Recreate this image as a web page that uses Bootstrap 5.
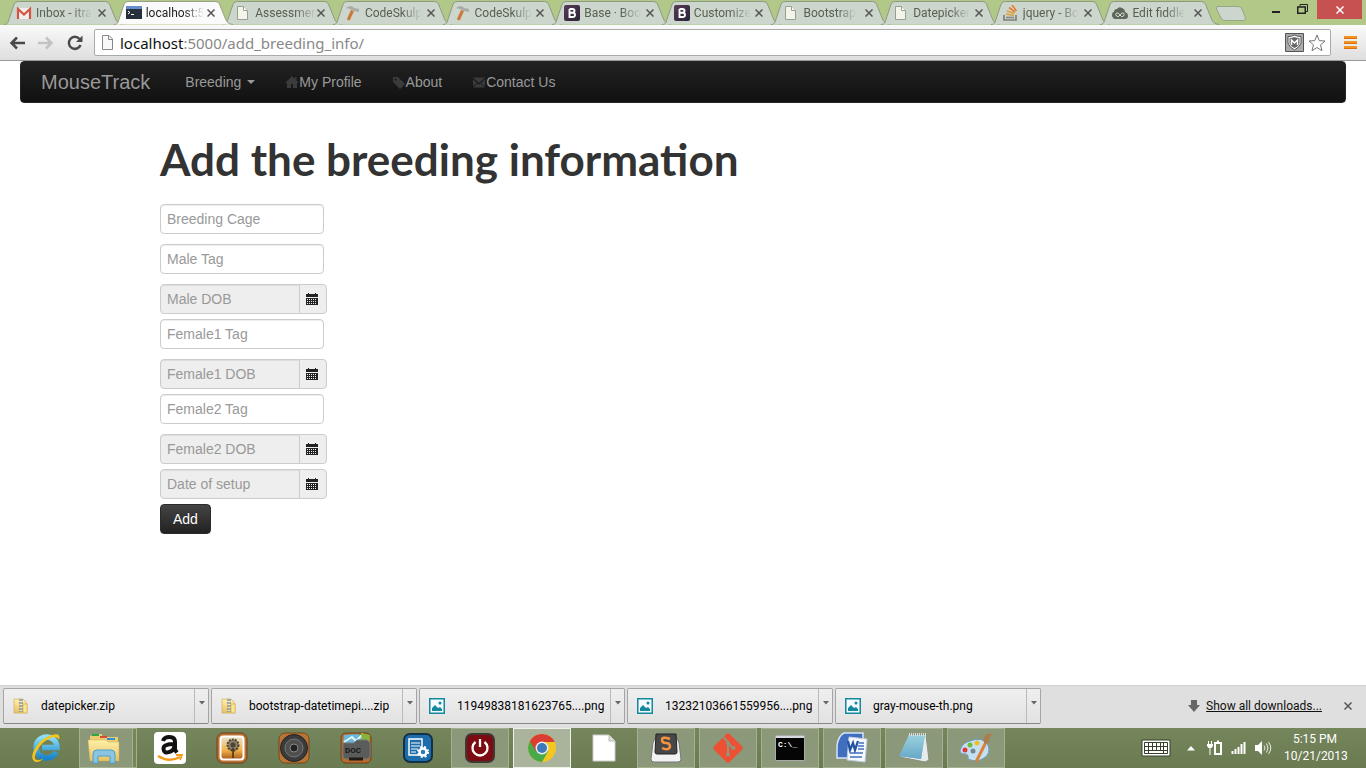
<!DOCTYPE html>
<html lang="en">
<head>
<meta charset="utf-8">
<meta name="viewport" content="width=device-width, initial-scale=1">
<title>MouseTrack</title>
<link href="https://cdn.jsdelivr.net/npm/bootstrap@5.3.0/dist/css/bootstrap.min.css" rel="stylesheet">
<style>
  body { font-family: "Liberation Sans", Arial, sans-serif; font-size: 14px; line-height: 20px; color: #333; background: #fff; }
  button { font: inherit; }
  svg { display: block; flex: none; }
  .chrome-ui { font-family: Roboto, "Noto Sans", sans-serif; font-size: 12px; }
  .bare { border: 0; padding: 0; background: none; color: inherit; }

  /* tab strip */
  .tabstrip { background: #b1c888; height: 25px; padding-left: 4px; }
  .tab-item { position: relative; flex: 1 1 0; min-width: 0; height: 25px; padding: 1px 8px 0 12px; color: #57604f; }
  .tab-item .shape { position: absolute; top: 0; left: 0; width: calc(100% + 10px); height: 25px; fill: #ccd6cd; stroke: #8d9a83; }
  .tab-item.current { z-index: 2; color: #222; }
  .tab-item.current .shape { fill: #fafafa; stroke: #98a088; }
  .tab-link { position: relative; color: inherit; text-decoration: none; gap: 4px; }
  .tab-text { white-space: nowrap; overflow: hidden; -webkit-mask-image: linear-gradient(90deg, #000 65%, transparent); mask-image: linear-gradient(90deg, #000 65%, transparent); }
  .tab-close { position: relative; }
  .tab-close, .shelf-close { color: #555; }
  .strip-end { width: 156px; }
  .win-close { width: 45px; height: 19px; background: #c75050; }

  /* toolbar */
  .toolbar { height: 36px; padding: 4px 8px 4px 9px; background: linear-gradient(#fafafa, #dedede); border-bottom: 1px solid #999; }
  .nav-icons { width: 85px; gap: 13px; }
  .omnibox { height: 27px; border: 1px solid #aaa; border-radius: 2px; background: #fff; padding: 0 4px 0 7px; }
  .omnibox a { font-family: "Noto Sans", sans-serif; font-size: 15px; line-height: 24px; color: #888; text-decoration: none; margin-left: 7px; }
  .omnibox b { font-weight: 400; color: #111; }
  .menu-btn { width: 27px; }

  /* page */
  .site-nav { min-height: 42px; padding: 0 20px; background: linear-gradient(#222, #111); border: 1px solid #252525; border-radius: 4px; }
  .site-nav .navbar-brand { font-size: 20px; line-height: 20px; padding: 10px 20px 10px 0; margin: 0; color: #999; }
  .site-nav .navbar-nav .nav-link { display: flex; align-items: center; padding: 10px 15px; color: #999; }
  .site-nav .dropdown-toggle::after { margin-left: 6px; border-width: 4px 4px 0; vertical-align: 0; }
  .site-nav svg { fill: #3b3b3b; }
  .page-body { padding: 24px 140px 40px; }
  .page-title { font-family: Rancho, Lato, sans-serif; font-size: 44px; line-height: 64px; font-weight: 700; color: #333; margin: 0 0 13px; }
  .field { height: 30px; padding: 4px 6px; font-size: 14px; line-height: 20px; border: 1px solid #ccc; border-radius: 4px; box-shadow: inset 0 1px 1px rgba(0,0,0,.075); }
  .field::placeholder { color: #999; }
  .tag-field { width: 164px; margin-bottom: 10px; }
  .date-group { width: 167px; height: 30px; margin-bottom: 5px; }
  .date-group .field, .date-group .input-group-text { background: #eee; }
  .date-group .input-group-text { width: 28px; padding: 0 6px; border-color: #ccc; border-radius: 4px; }
  .add-btn { height: 30px; padding: 4px 12px; font-size: 14px; line-height: 20px; color: #fff; text-shadow: 0 -1px 0 rgba(0,0,0,.25); background: linear-gradient(#444, #222); border: 1px solid #2b2b2b; border-radius: 4px; }

  /* downloads shelf */
  .shelf { height: 43px; padding: 2px 14px 4px 3px; gap: 2px; background: #dfdfdf; border-top: 1px solid #d2d2d2; color: #000; }
  .dl { flex: 0 1 206px; height: 36px; min-width: 0; border: 1px solid #a5a5a5; border-bottom-color: #888; border-radius: 2px; background: linear-gradient(#efefef, #e2e2e2); }
  .dl .file { padding-left: 9px; gap: 12px; min-width: 0; }
  .dl .more { width: 14px; height: 34px; border-left: 1px solid #bbb; padding: 12px 0 0 4px; }
  .shelf a { color: #111; }

  /* taskbar */
  .taskbar { height: 40px; padding: 0 20px 0 17px; gap: 4px; background: linear-gradient(#75855c, #6a7a51); color: #fff; }
  .task { flex: 0 1 58px; min-width: 34px; height: 40px; border: 1px solid transparent; }
  .task.open { border-color: #a5b08f; background: #8b987a; }
  .task.stacked { box-shadow: inset -3px 0 #75855c, inset -4px 0 #a5b08f; }
  .task.front { border-color: #eef0e8; background: #aab39c; }
  .clock { line-height: 17px; width: 62px; }
</style>
</head>
<body class="d-flex flex-column min-vh-100">

<svg width="0" height="0" class="position-absolute" aria-hidden="true">
  <defs>
    <linearGradient id="gBlue" x2="0" y2="1"><stop stop-color="#8ce0fa"/><stop offset="1" stop-color="#1784ca"/></linearGradient>
    <linearGradient id="gBoot" x2="1" y2="1"><stop stop-color="#5a3c58"/><stop offset="1" stop-color="#292336"/></linearGradient>
    <linearGradient id="gFold" x2="0" y2="1"><stop stop-color="#fff0a9"/><stop offset="1" stop-color="#e5c263"/></linearGradient>
    <linearGradient id="gSun" x2="0" y2="1"><stop stop-color="#e9e3d0"/><stop offset=".6" stop-color="#f0b24b"/><stop offset="1" stop-color="#a75818"/></linearGradient>
    <symbol id="tabshape" viewBox="0 0 118 25" preserveAspectRatio="none"><path d="M0 24.5C4 24.5 4 22 5 19L10 4Q11 1.5 14 1.5H100Q103 1.500 104 4L110 19Q112 24.500 118 24.500" vector-effect="non-scaling-stroke"/></symbol>
    <symbol id="x" viewBox="0 0 8 8"><path d="M.5.5L7.500 7.500M7.500.5L.5 7.500" stroke="currentColor" stroke-width="1.500"/></symbol>
    <symbol id="page" viewBox="0 0 16 16"><path d="M2.500 1.500H8.500L12.500 5.500V14.500H2.500Z" fill="#f3f5ea" stroke="#999f90"/><path d="M8.500 1.500V5.500H12.500" fill="#fff" stroke="#999f90"/></symbol>
    <symbol id="hammer" viewBox="0 0 16 16"><path d="M6 5L9 6L5 15Q3 16 2 14Z" fill="#c97a3a"/><path d="M1 3Q6-1 9 3L14 4V7L9 6L5 4Z" fill="#a9aca5"/></symbol>
    <symbol id="boot" viewBox="0 0 16 16"><rect width="16" height="16" rx="2" fill="url(#gBoot)"/><path d="M5.500 4H8.500Q10.500 4 10.500 5.800T8.500 7.700H5.500M8.500 7.700Q11 7.700 11 9.900T8.500 12H5.500V4" fill="none" stroke="#fff" stroke-width="1.900"/></symbol>
    <symbol id="zip" viewBox="0 0 16 16"><path d="M1 1H10L14 5V15H1Z" fill="url(#gFold)" stroke="#cda94e" stroke-width=".6"/><path d="M8 1V14" stroke="#566b85" stroke-width="3" stroke-dasharray="2 1"/><path d="M8 1V14" stroke="#e5e9ec"/><path d="M10 6H14V15H10Z" fill="#fae68b" stroke="#c9a850" stroke-width=".6"/></symbol>
    <symbol id="pic" viewBox="0 0 16 16"><path d="M.75.75H15.250V15.250H.75Z" fill="#f4fbfc" stroke="#14889f" stroke-width="1.500"/><path d="M3 13V10L6 7L9 10L11 9L13 11V13Z" fill="#14889f"/><circle cx="11" cy="5" r="1.500" fill="#14889f"/></symbol>
    <symbol id="cal" viewBox="0 0 12 12"><path d="M0 1H2V0H3V1H9V0H10V1H12V4H0ZM0 5H12V12H0Z" fill="#222"/><path d="M1 6.500H11M1 8.500H11M1 10.500H11" stroke="#eee" stroke-dasharray="1 1"/></symbol>
    <symbol id="caret" viewBox="0 0 6 4"><path d="M0 0H6L3 3.500Z" fill="#666"/></symbol>
  </defs>
</svg>

<header class="chrome-ui">
  <div class="tabstrip d-flex">
    <nav class="d-flex flex-grow-1" aria-label="Tabs">
      <div class="tab-item d-flex align-items-center"><svg class="shape"><use href="#tabshape"/></svg>
        <a href="#" class="tab-link d-flex flex-grow-1 align-items-center overflow-hidden"><svg width="16" height="16" viewBox="0 0 16 16"><path d="M1 3H15V14H1Z" fill="#eee"/><path d="M2 14V4L8 9.500L14 4V14" fill="none" stroke="#d65343" stroke-width="2.200"/></svg><span class="tab-text">Inbox - itra</span></a><button class="bare tab-close" aria-label="Close"><svg width="8" height="8"><use href="#x"/></svg></button></div>
      <div class="tab-item current d-flex align-items-center"><svg class="shape"><use href="#tabshape"/></svg>
        <a href="#" class="tab-link d-flex flex-grow-1 align-items-center overflow-hidden"><svg width="16" height="16" viewBox="0 0 16 16"><path d="M0 1H16V14H0Z" fill="#26303d"/><path d="M0 1H16V4H0Z" fill="#668dcc"/><path d="M2 6L4 7.500L2 9M5 9.500H8" stroke="#fff" fill="none"/></svg><span class="tab-text">localhost:5</span></a><button class="bare tab-close" aria-label="Close"><svg width="8" height="8"><use href="#x"/></svg></button></div>
      <div class="tab-item d-flex align-items-center"><svg class="shape"><use href="#tabshape"/></svg>
        <a href="#" class="tab-link d-flex flex-grow-1 align-items-center overflow-hidden"><svg width="16" height="16"><use href="#page"/></svg><span class="tab-text">Assessmen</span></a><button class="bare tab-close" aria-label="Close"><svg width="8" height="8"><use href="#x"/></svg></button></div>
      <div class="tab-item d-flex align-items-center"><svg class="shape"><use href="#tabshape"/></svg>
        <a href="#" class="tab-link d-flex flex-grow-1 align-items-center overflow-hidden"><svg width="16" height="16"><use href="#hammer"/></svg><span class="tab-text">CodeSkulp</span></a><button class="bare tab-close" aria-label="Close"><svg width="8" height="8"><use href="#x"/></svg></button></div>
      <div class="tab-item d-flex align-items-center"><svg class="shape"><use href="#tabshape"/></svg>
        <a href="#" class="tab-link d-flex flex-grow-1 align-items-center overflow-hidden"><svg width="16" height="16"><use href="#hammer"/></svg><span class="tab-text">CodeSkulp</span></a><button class="bare tab-close" aria-label="Close"><svg width="8" height="8"><use href="#x"/></svg></button></div>
      <div class="tab-item d-flex align-items-center"><svg class="shape"><use href="#tabshape"/></svg>
        <a href="#" class="tab-link d-flex flex-grow-1 align-items-center overflow-hidden"><svg width="16" height="16"><use href="#boot"/></svg><span class="tab-text">Base · Boo</span></a><button class="bare tab-close" aria-label="Close"><svg width="8" height="8"><use href="#x"/></svg></button></div>
      <div class="tab-item d-flex align-items-center"><svg class="shape"><use href="#tabshape"/></svg>
        <a href="#" class="tab-link d-flex flex-grow-1 align-items-center overflow-hidden"><svg width="16" height="16"><use href="#boot"/></svg><span class="tab-text">Customize</span></a><button class="bare tab-close" aria-label="Close"><svg width="8" height="8"><use href="#x"/></svg></button></div>
      <div class="tab-item d-flex align-items-center"><svg class="shape"><use href="#tabshape"/></svg>
        <a href="#" class="tab-link d-flex flex-grow-1 align-items-center overflow-hidden"><svg width="16" height="16"><use href="#page"/></svg><span class="tab-text">Bootstrap</span></a><button class="bare tab-close" aria-label="Close"><svg width="8" height="8"><use href="#x"/></svg></button></div>
      <div class="tab-item d-flex align-items-center"><svg class="shape"><use href="#tabshape"/></svg>
        <a href="#" class="tab-link d-flex flex-grow-1 align-items-center overflow-hidden"><svg width="16" height="16"><use href="#page"/></svg><span class="tab-text">Datepicker</span></a><button class="bare tab-close" aria-label="Close"><svg width="8" height="8"><use href="#x"/></svg></button></div>
      <div class="tab-item d-flex align-items-center"><svg class="shape"><use href="#tabshape"/></svg>
        <a href="#" class="tab-link d-flex flex-grow-1 align-items-center overflow-hidden"><svg width="16" height="16" viewBox="0 0 16 16" fill="none"><path d="M1 10V15H13V10" stroke="#7d8078" stroke-width="1.700"/><path d="M3 12.500H11" stroke="#87857a" stroke-width="1.600"/><path d="M3 9L11 10.500M4 6L11.500 8.500" stroke="#d9a13d" stroke-width="1.600"/><path d="M6 2.500L12 7M9 0L13.500 6" stroke="#e77c31" stroke-width="1.600"/></svg><span class="tab-text">jquery - Bo</span></a><button class="bare tab-close" aria-label="Close"><svg width="8" height="8"><use href="#x"/></svg></button></div>
      <div class="tab-item d-flex align-items-center"><svg class="shape"><use href="#tabshape"/></svg>
        <a href="#" class="tab-link d-flex flex-grow-1 align-items-center overflow-hidden"><svg width="16" height="16" viewBox="0 0 16 16"><path d="M3 14Q0 13 0 10T2 7Q2 4 5 4Q7 1 10 3Q13 4 13 7Q16 8 16 11T13 14Z" fill="#5e6659"/><path d="M8 10Q6 7 4.500 8T4.500 11T8 10Q10 7 11.500 8T11.500 11T8 10Z" fill="none" stroke="#d5ddd2"/></svg><span class="tab-text">Edit fiddle</span></a><button class="bare tab-close" aria-label="Close"><svg width="8" height="8"><use href="#x"/></svg></button></div>
    </nav>
    <div class="strip-end d-flex flex-shrink-0 justify-content-end">
      <button class="bare me-auto ps-1" aria-label="New tab"><svg width="34" height="18" viewBox="0 0 34 18"><path d="M3 2.500H24Q27 2.500 28 5L31.500 14Q32 16.500 29 16.500H11Q8 16.500 7 14L2.500 5Q2 2.500 4 2.500Z" fill="#ccd6cd" stroke="#97a687"/></svg></button>
      <button class="bare me-3" aria-label="Minimize"><svg width="9" height="25"><path d="M0 12H8" stroke="#222" stroke-width="2"/></svg></button>
      <button class="bare me-2" aria-label="Restore"><svg width="12" height="25"><path d="M3 6.500V4.500H10.500V11.500H9" fill="none" stroke="#222"/><path d="M.75 7H8.250V13.250H.75Z" fill="none" stroke="#222" stroke-width="1.500"/></svg></button>
      <button class="bare win-close d-flex align-items-center justify-content-center text-white me-1" aria-label="Close window"><svg width="8" height="8"><use href="#x"/></svg></button>
    </div>
  </div>

  <div class="toolbar d-flex align-items-center">
    <div class="nav-icons d-flex">
      <button class="bare" aria-label="Back"><svg width="16" height="16" viewBox="0 0 16 16"><path d="M16 8H3M8 2.500L2.500 8L8 13.500" fill="none" stroke="#4a4a4a" stroke-width="2.500"/></svg></button>
      <button class="bare" aria-label="Forward"><svg width="16" height="16" viewBox="0 0 16 16"><path d="M0 8H13M8 2.500L13.500 8L8 13.500" fill="none" stroke="#c2c2c2" stroke-width="2.500"/></svg></button>
      <button class="bare" aria-label="Reload"><svg width="16" height="16" viewBox="0 0 16 16"><path d="M12.500 4A6 6 0 1 0 13.500 10" fill="none" stroke="#4a4a4a" stroke-width="2.500"/><path d="M15.500 0.500V7H9Z" fill="#4a4a4a"/></svg></button>
    </div>
    <div class="omnibox d-flex align-items-center flex-grow-1">
      <svg width="11" height="15" viewBox="0 0 11 15"><path d="M.5.5H7L10.500 4V14.500H.5Z" fill="#f8f8f8" stroke="#888"/><path d="M6.500.5V4.500H10.500" fill="none" stroke="#888"/></svg>
      <a href="#" class="me-auto"><b>localhost</b>:5000/add_breeding_info/</a>
      <button class="bare me-1" aria-label="Site safety"><svg width="19" height="19" viewBox="0 0 19 19"><path d="M.5.5H18.500V18.500H.5Z" fill="#aaa" stroke="#555"/><path d="M3 3.500Q7 3.500 9.500 2Q12 3.500 16 3.500V10Q15 14 9.500 17Q4 14 3 10Z" fill="#fff" stroke="#555"/><path d="M4.500 5Q8 5 9.500 4Q11 5 14.500 5V10Q14 13 9.500 15Q5 13 4.500 10Z" fill="#666"/><path d="M6.500 12V7L9.500 10L12.500 7V12" fill="none" stroke="#fff" stroke-width="1.500"/></svg></button>
      <button class="bare" aria-label="Bookmark"><svg width="18" height="18" viewBox="0 0 18 18"><path d="M9 1L11.200 6.600L17 7L12.500 10.800L14 16.700L9 13.500L4 16.700L5.500 10.800L1 7L6.800 6.600Z" fill="#fff" stroke="#777" stroke-linejoin="round"/></svg></button>
    </div>
    <button class="bare menu-btn d-flex justify-content-end pe-0" aria-label="Menu"><svg width="14" height="13"><path d="M0 1.500H13M0 6.500H13M0 11.500H13" stroke="#f0941d" stroke-width="3"/><path d="M0 2.500H13M0 7.500H13M0 12.500H13" stroke="#dc6f14"/></svg></button>
  </div>
</header>

<main class="flex-grow-1 px-3 mx-1">
  <nav class="site-nav navbar navbar-expand">
    <a class="navbar-brand" href="#">MouseTrack</a>
    <ul class="navbar-nav">
      <li class="nav-item dropdown"><a class="nav-link dropdown-toggle" href="#" data-bs-toggle="dropdown">Breeding</a></li>
      <li class="nav-item"><a class="nav-link" href="#"><svg width="14" height="14" viewBox="0 0 14 14"><path d="M7 1L0 8H2V13H6V9H8V13H12V8H14L11.500 5.500V2H10V4Z"/></svg>My Profile</a></li>
      <li class="nav-item"><a class="nav-link" href="#"><svg width="14" height="14" viewBox="0 0 14 14"><path fill-rule="evenodd" d="M1 2H6L13 9L8 14L1 7ZM3.500 3.500A1 1 0 1 0 3.600 3.500Z"/></svg>About</a></li>
      <li class="nav-item"><a class="nav-link" href="#"><svg width="14" height="14" viewBox="0 0 14 14"><path d="M1 2.500H13L7 8ZM1 4L5 8L1 11.500ZM13 4V11.500L9 8ZM5.500 8.500L7 9.700L8.500 8.500L13 12.500H1Z"/></svg>Contact Us</a></li>
    </ul>
  </nav>

  <section class="page-body">
    <h1 class="page-title">Add the breeding information</h1>
    <form class="d-flex flex-column align-items-start">
      <input class="field tag-field" type="text" placeholder="Breeding Cage" aria-label="Breeding Cage">
      <input class="field tag-field" type="text" placeholder="Male Tag" aria-label="Male Tag">
      <div class="input-group date-group"><input class="form-control field" type="text" readonly placeholder="Male DOB" aria-label="Male DOB"><button type="button" class="input-group-text" aria-label="Pick male DOB"><svg width="12" height="12"><use href="#cal"/></svg></button></div>
      <input class="field tag-field" type="text" placeholder="Female1 Tag" aria-label="Female1 Tag">
      <div class="input-group date-group"><input class="form-control field" type="text" readonly placeholder="Female1 DOB" aria-label="Female1 DOB"><button type="button" class="input-group-text" aria-label="Pick female1 DOB"><svg width="12" height="12"><use href="#cal"/></svg></button></div>
      <input class="field tag-field" type="text" placeholder="Female2 Tag" aria-label="Female2 Tag">
      <div class="input-group date-group"><input class="form-control field" type="text" readonly placeholder="Female2 DOB" aria-label="Female2 DOB"><button type="button" class="input-group-text" aria-label="Pick female2 DOB"><svg width="12" height="12"><use href="#cal"/></svg></button></div>
      <div class="input-group date-group"><input class="form-control field" type="text" readonly placeholder="Date of setup" aria-label="Date of setup"><button type="button" class="input-group-text" aria-label="Pick date of setup"><svg width="12" height="12"><use href="#cal"/></svg></button></div>
      <button class="add-btn" type="submit">Add</button>
    </form>
  </section>
</main>

<footer class="chrome-ui">
  <div class="shelf d-flex align-items-center">
    <div class="dl d-flex"><button class="bare file d-flex align-items-center flex-grow-1"><svg width="16" height="16"><use href="#zip"/></svg><span class="text-truncate">datepicker.zip</span></button><button class="bare more d-flex align-items-start" aria-label="Options"><svg width="6" height="4"><use href="#caret"/></svg></button></div>
    <div class="dl d-flex"><button class="bare file d-flex align-items-center flex-grow-1"><svg width="16" height="16"><use href="#zip"/></svg><span class="text-truncate">bootstrap-datetimepi....zip</span></button><button class="bare more d-flex align-items-start" aria-label="Options"><svg width="6" height="4"><use href="#caret"/></svg></button></div>
    <div class="dl d-flex"><button class="bare file d-flex align-items-center flex-grow-1"><svg width="16" height="16"><use href="#pic"/></svg><span class="text-truncate">11949838181623765....png</span></button><button class="bare more d-flex align-items-start" aria-label="Options"><svg width="6" height="4"><use href="#caret"/></svg></button></div>
    <div class="dl d-flex"><button class="bare file d-flex align-items-center flex-grow-1"><svg width="16" height="16"><use href="#pic"/></svg><span class="text-truncate">13232103661559956....png</span></button><button class="bare more d-flex align-items-start" aria-label="Options"><svg width="6" height="4"><use href="#caret"/></svg></button></div>
    <div class="dl d-flex"><button class="bare file d-flex align-items-center flex-grow-1"><svg width="16" height="16"><use href="#pic"/></svg><span class="text-truncate">gray-mouse-th.png</span></button><button class="bare more d-flex align-items-start" aria-label="Options"><svg width="6" height="4"><use href="#caret"/></svg></button></div>
    <svg class="ms-auto me-1" width="12" height="12"><path d="M3 0H9V5H12L6 12L0 5H3Z" fill="#666"/></svg>
    <a href="#" class="text-nowrap">Show all downloads...</a>
    <button class="bare shelf-close ms-3 ps-1" aria-label="Close shelf"><svg width="8" height="8"><use href="#x"/></svg></button>
  </div>

  <div class="taskbar d-flex align-items-center">
    <button class="bare task d-flex align-items-center justify-content-center" aria-label="Internet Explorer"><svg width="32" height="32" viewBox="0 0 32 32"><path d="M26 20A10.500 10.500 0 1 1 27 15.500H12" fill="none" stroke="url(#gBlue)" stroke-width="5.500"/><path d="M4 29C-2 24 9 5 24 2.500Q31 1 29 8C28 4 21 4 14 10S4 24 5 27Q8 30 14 26Q8 32 4 29Z" fill="#f5c51d"/></svg></button>
    <button class="bare task open stacked d-flex align-items-center justify-content-center pe-2" aria-label="File Explorer"><svg width="34" height="32" viewBox="0 0 34 32"><path d="M3 4L8 2H15V5H31V29H3Z" fill="#eccd70"/><path d="M5 3H12" stroke="#2ca744" stroke-width="2"/><path d="M13 5H20" stroke="#d64c3b" stroke-width="2"/><path d="M20 7H28" stroke="#328fd4" stroke-width="2"/><path d="M1 8H19L21 10H32V29H3Z" fill="url(#gFold)" stroke="#d2ad4f" stroke-width=".5"/><path d="M6 31V22Q6 18 10 18H24Q28 18 28 22V31H23V24H11V31Z" fill="#8ac5e3" stroke="#4d9fca"/></svg></button>
    <button class="bare task d-flex align-items-center justify-content-center" aria-label="Amazon"><svg width="32" height="32" viewBox="0 0 32 32"><rect width="32" height="32" rx="4" fill="#fff"/><path d="M9 9Q10 5 15.500 5T21 10V18L23 20.500M20 12Q9 12 9.500 17T15 20Q20 19 20.500 14" fill="none" stroke="#111" stroke-width="4"/><path d="M4 24Q15 31 26 25" fill="none" stroke="#f49a1c" stroke-width="2.500"/><path d="M22 23L28 23L26 28" fill="none" stroke="#f49a1c" stroke-width="1.800"/></svg></button>
    <button class="bare task d-flex align-items-center justify-content-center" aria-label="Photos"><svg width="32" height="32" viewBox="0 0 32 32"><rect x="1" y="1" width="30" height="30" rx="6" fill="#bb7134" stroke="#744018"/><rect x="4.500" y="4.500" width="23" height="23" rx="3" fill="url(#gSun)" stroke="#fff" stroke-width="2"/><circle cx="17" cy="13" r="5.500" fill="#8b8068" stroke="#4c4336" stroke-width="2" stroke-dasharray="2 1"/><circle cx="17" cy="13" r="2.500" fill="#4c4336"/><path d="M17 16V26" stroke="#443016" stroke-width="1.500"/></svg></button>
    <button class="bare task d-flex align-items-center justify-content-center" aria-label="Sound"><svg width="32" height="32" viewBox="0 0 32 32"><rect x="1" y="1" width="30" height="30" rx="6" fill="#b87337" stroke="#7b481d"/><circle cx="16" cy="16" r="13.500" fill="#3b3b3b" stroke="#222"/><circle cx="16" cy="16" r="9" fill="#4f4f4f" stroke="#777"/><circle cx="16" cy="16" r="4" fill="#222" stroke="#888"/></svg></button>
    <button class="bare task d-flex align-items-center justify-content-center" aria-label="Documents"><svg width="32" height="32" viewBox="0 0 32 32"><rect x="1" y="1" width="30" height="30" rx="5" fill="#b76b2d" stroke="#6e431c"/><path d="M3 12L4 3L18 2L24 6V12Z" fill="#65b8da"/><path d="M4 10L12 5L16 9L22 3L24 11" fill="none" stroke="#e3f4f9" stroke-width="2"/><path d="M21 1L30 3L29 12H22Z" fill="#87b53c"/><path d="M3 11H14L17 8H27L30 11V24Q30 27 26 27H6Q3 27 3 24Z" fill="#5a5b5b" stroke="#777"/><path d="M9 27H23" stroke="#211b16" stroke-width="3"/><text x="5" y="21" font-size="8" font-family="Roboto" fill="#181818" font-weight="700">DOC</text></svg></button>
    <button class="bare task d-flex align-items-center justify-content-center" aria-label="Settings"><svg width="32" height="32" viewBox="0 0 32 32"><rect x="2" y="2" width="28" height="28" rx="6" fill="#1c6da9" stroke="#133148" stroke-width="2"/><path d="M7 7H20V23H7Z" fill="none" stroke="#fff" stroke-width="1.500"/><path d="M9 11H18M9 14H18M9 17H16M9 20H14" stroke="#fff"/><circle cx="21" cy="20" r="3.500" fill="#2c7db5" stroke="#fff" stroke-width="2.500"/><circle cx="21" cy="20" r="5" fill="none" stroke="#fff" stroke-width="2" stroke-dasharray="2 2"/></svg></button>
    <button class="bare task open d-flex align-items-center justify-content-center" aria-label="Power"><svg width="32" height="32" viewBox="0 0 32 32"><rect x="2" y="2" width="28" height="28" rx="6" fill="#7c0c12" stroke="#3e3734" stroke-width="2"/><path d="M11.500 10A7.500 7.500 0 1 0 20.500 10M16 7V15" fill="none" stroke="#fff" stroke-width="2.300"/></svg></button>
    <button class="bare task front d-flex align-items-center justify-content-center" aria-label="Chrome"><svg width="30" height="30" viewBox="0 0 30 30"><circle cx="15" cy="15" r="14" fill="#f3c620"/><path d="M15 15L2.900 8A14 14 0 0 0 15 29L21 18.500Z" fill="#4aaa4a"/><path d="M15 15L8.900 18.500L2.900 8A14 14 0 0 1 27.700 9H15Z" fill="#da3d31"/><circle cx="15" cy="15" r="6.500" fill="#eee"/><circle cx="15" cy="15" r="5" fill="#3c7abc"/></svg></button>
    <button class="bare task d-flex align-items-center justify-content-center" aria-label="File"><svg width="24" height="28" viewBox="0 0 24 28"><path d="M1 1H17L23 7V27H1Z" fill="#fff" stroke="#ccc"/><path d="M17 1V7H23" fill="#ddd" stroke="#bbb"/></svg></button>
    <button class="bare task open d-flex align-items-center justify-content-center" aria-label="Sublime Text"><svg width="32" height="32" viewBox="0 0 32 32"><path d="M3 11L5 6H27L29 11L31 27Q31 30 28 30H4Q1 30 1 27Z" fill="#f2f2f2" stroke="#777"/><path d="M6 2H26L27 20Q27 22 25 22H7Q5 22 5 20Z" fill="#474747" stroke="#222"/><path d="M20 7Q12 4 12 8Q12 11 16 11T20 15Q18 19 12 16" fill="none" stroke="#f4933f" stroke-width="2.500"/></svg></button>
    <button class="bare task open d-flex align-items-center justify-content-center" aria-label="Git"><svg width="32" height="32" viewBox="0 0 32 32"><rect x="5" y="5" width="22" height="22" rx="2" fill="#ee5033" transform="rotate(45 16 16)"/><path d="M11 5L16 10V23M16 11L21 16" fill="none" stroke="#8b987a" stroke-width="2"/><g fill="#8b987a"><circle cx="16" cy="11" r="2"/><circle cx="21.500" cy="16" r="2"/><circle cx="16" cy="22.500" r="2"/></g></svg></button>
    <button class="bare task open d-flex align-items-center justify-content-center" aria-label="Command Prompt"><svg width="30" height="26" viewBox="0 0 30 26"><path d="M.5.5H29.500V25.500H.5Z" fill="#050505" stroke="#aaa"/><path d="M1 1H29V3H1Z" fill="#d5d9df"/><text x="3" y="12" font-size="8" font-family="Liberation Mono" font-weight="700" fill="#fff">C:\_</text></svg></button>
    <button class="bare task open d-flex align-items-center justify-content-center" aria-label="Word"><svg width="32" height="32" viewBox="0 0 32 32"><path d="M8 1H27V26H1V14Q2 4 8 1Z" fill="#416fbf" stroke="#d9e4f7" stroke-width="1.500"/><path d="M13 5L31 7L29 30L11 28Z" fill="#f5f8fd" stroke="#bdcbe1"/><path d="M12 9L14 18L17 11L19 18L22 9" fill="none" stroke="#2453a3" stroke-width="2.300"/><path d="M23 11H28M22 14H28M22 17H28M14 21H27M14 25H26" stroke="#426fba" stroke-width="1.500"/></svg></button>
    <button class="bare task open d-flex align-items-center justify-content-center" aria-label="Notepad"><svg width="32" height="32" viewBox="0 0 32 32"><path d="M12 3H28L31 28L27 30L2 25Z" fill="#e7ecea" stroke="#8b8e79"/><path d="M11 3H27L23 27L1 24Z" fill="url(#gBlue)"/><path d="M11 3H27L23 27L1 24Z" fill="#a7c5c5" opacity=".55"/><path d="M11 2.500H28" stroke="#ddd" stroke-width="3" stroke-dasharray="1 1"/></svg></button>
    <button class="bare task open d-flex align-items-center justify-content-center" aria-label="Paint"><svg width="34" height="32" viewBox="0 0 34 32"><path d="M11 9Q24 4 29 13Q32 22 25 26Q18 31 9 27Q10 22 6 22Q-1 22 2 16Q4 11 11 9Z" fill="#c5e0f1" stroke="#6ba1c4"/><circle cx="6" cy="18" r="2.500" fill="#dc3c37"/><circle cx="11" cy="13" r="2.500" fill="#73b93a"/><circle cx="18" cy="11" r="2.500" fill="#f1bd29"/><circle cx="14" cy="19" r="2.500" fill="#738794"/><path d="M27 10L17 30" stroke="#dc8138" stroke-width="3"/><path d="M24 8Q27 0 33 2Q30 5 30 10L26 12Z" fill="#a97d4c"/></svg></button>

    <div class="d-flex align-items-center ms-auto me-2 gap-2">
      <svg class="me-1" width="30" height="18" viewBox="0 0 30 18"><path d="M1 1H29V17H1Z" fill="#fff" stroke="#37412a"/><path d="M3.500 3.500H26.500V14.500H3.500ZM3.500 7.500H26.500M3.500 11.500H26.500M7.500 3V15M11.500 3V11M15.500 3V11M19.500 3V11M22.500 3V15" fill="none" stroke="#37412a"/></svg>
      <svg width="8" height="5" class="mx-1"><path d="M0 4.500L4 0L8 4.500Z" fill="#fff"/></svg>
      <svg width="16" height="16" viewBox="0 0 16 16" fill="none" stroke="#fff"><path d="M1.500 1V4M4.500 1V4M3 7V15"/><path d="M0 4H6V6L4.500 8H1.500L0 6Z" fill="#fff" stroke="none"/><path d="M8 3H14V14H8ZM10 1.500H12" stroke-width="2"/></svg>
      <svg width="16" height="14"><path d="M1.500 10V13M4.500 8V13M7.500 6V13M10.500 3V13M13.500 1V13" stroke="#fff" stroke-width="2"/></svg>
      <svg width="17" height="14" viewBox="0 0 17 14"><path d="M0 4H3L7 0V14L3 10H0Z" fill="#fff"/><path d="M9 4.500Q11 7 9 9.500M11.500 2.500Q14.500 7 11.500 11.500M13.500 1Q18 7 13.500 13" fill="none" stroke="#e8ecdf"/></svg>
    </div>
    <div class="clock text-center text-nowrap">5:15 PM<br>10/21/2013</div>
  </div>
</footer>

<script src="https://cdn.jsdelivr.net/npm/bootstrap@5.3.0/dist/js/bootstrap.bundle.min.js"></script>
</body>
</html>
